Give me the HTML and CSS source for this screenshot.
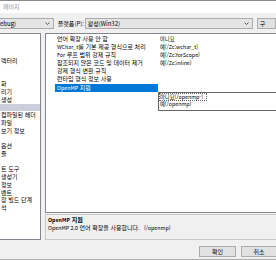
FILE: index.html
```html
<!DOCTYPE html>
<html lang="ko">
<head>
    <meta charset="UTF-8">
    <title>페이지</title>
    <link rel="stylesheet" href="styles.css">
</head>
<body>
    <div class="window">
        <div class="titlebar">페이지</div>

        <div class="toolbar">
            <div class="combo config">
                <span class="combo-text">ebug)</span>
                <svg class="arrow" width="5" height="3" viewBox="0 0 5 3"><path d="M0.5 0.5 L2.5 2.5 L4.5 0.5" fill="none" stroke="#333" stroke-width="0.8"/></svg>
            </div>
            <span class="label">플랫폼(P):</span>
            <div class="combo platform">
                <span class="combo-text">활성(Win32)</span>
                <svg class="arrow" width="5" height="3" viewBox="0 0 5 3"><path d="M0.5 0.5 L2.5 2.5 L4.5 0.5" fill="none" stroke="#333" stroke-width="0.8"/></svg>
            </div>
            <div class="btn manager">구</div>
        </div>

        <div class="main">
            <ul class="tree">
                <li></li>
                <li></li>
                <li></li>
                <li>렉터리</li>
                <li></li>
                <li></li>
                <li>화</li>
                <li>리기</li>
                <li>생성</li>
                <li class="selected"></li>
                <li>컴파일된 헤더</li>
                <li>파일</li>
                <li>보기 정보</li>
                <li></li>
                <li>옵션</li>
                <li>줄</li>
                <li></li>
                <li>트 도구</li>
                <li>생성기</li>
                <li>정보</li>
                <li>벤트</li>
                <li>장 빌드 단계</li>
                <li>석</li>
            </ul>

            <div class="right">
                <div class="grid">
                    <div class="row"><span class="gutter"></span><span class="name">언어 확장 사용 안 함</span><span class="value">아니요</span></div>
                    <div class="row"><span class="gutter"></span><span class="name"><span class="en">WChar_t</span>를 기본 제공 형식으로 처리</span><span class="value">예(/Zc:wchar_t)</span></div>
                    <div class="row"><span class="gutter"></span><span class="name"><span class="en">For</span> 루프 범위 강제 규칙</span><span class="value">예(/Zc:forScope)</span></div>
                    <div class="row"><span class="gutter"></span><span class="name">참조되지 않은 코드 및 데이터 제거</span><span class="value">예(/Zc:inline)</span></div>
                    <div class="row"><span class="gutter"></span><span class="name">강제 형식 변환 규칙</span><span class="value"></span></div>
                    <div class="row"><span class="gutter"></span><span class="name">런타임 형식 정보 사용</span><span class="value"></span></div>
                    <div class="row active"><span class="gutter"></span><span class="name"><span class="en">OpenMP</span> 지원</span><span class="value"></span></div>

                    <ul class="dropdown">
                        <li class="focused">아니요(/openmp-)</li>
                        <li>예(/openmp)</li>
                    </ul>
                </div>

                <div class="desc">
                    <div class="desc-title"><span class="en">OpenMP</span> 지원</div>
                    <div class="desc-text"><span class="desc-main"><span class="en">OpenMP 2.0</span> 언어 확장을 사용합니다.</span><span class="en">(/openmp)</span></div>
                </div>
            </div>
        </div>

        <div class="buttons">
            <div class="btn">확인</div>
            <div class="btn">취소</div>
        </div>
    </div>
</body>
</html>
```

FILE: styles.css
```css
body {
    margin: 0;
    padding: 0;
    width: 276px;
    height: 260px;
    overflow: hidden;
    background-color: #f0f0f0;
    font-family: "Noto Sans CJK KR", "Noto Sans", sans-serif;
    font-size: 6px;
    color: #000;
}

/* latin runs are a little smaller than hangul, as in Malgun Gothic */
.en {
    font-size: 5.3px;
}

.window {
    width: 276px;
    height: 260px;
    overflow: hidden;
}

.titlebar {
    height: 12px;
    line-height: 11px;
    border-top: 1px solid #8a8a8a;
    background-color: #fff;
    color: #9a9a9a;
    padding-left: 3px;
}

.toolbar {
    height: 20px;
    display: flex;
    align-items: flex-start;
    padding-top: 5px;
    box-sizing: border-box;
}

.combo {
    height: 11px;
    box-sizing: border-box;
    border: 1px solid #acacac;
    background-color: #e5e5e5;
    display: flex;
    align-items: center;
    justify-content: space-between;
    padding: 0 3px 0 2px;
}

.combo-text {
    line-height: 9px;
    white-space: nowrap;
}

.config {
    width: 57px;
    margin-left: -1px;
    padding-left: 0;
}

.label {
    margin-left: 4px;
    line-height: 11px;
    width: 28px;
    white-space: nowrap;
}

.platform {
    width: 175px;
}

.btn {
    height: 11px;
    box-sizing: border-box;
    border: 1px solid #adadad;
    background-color: #e1e1e1;
    display: flex;
    align-items: center;
    justify-content: center;
    line-height: 9px;
}

.manager {
    margin-left: 4px;
    width: 20px;
    justify-content: flex-start;
    padding-left: 2px;
}

.main {
    display: flex;
    height: 208px;
}

.tree {
    list-style-type: none;
    margin: 0 0 0 -1px;
    padding: 0;
    width: 42px;
    height: 207px;
    box-sizing: border-box;
    border: 1px solid #828790;
    background-color: #fff;
    overflow: hidden;
    white-space: nowrap;
}

.tree li {
    height: 7.74px;
    line-height: 7.74px;
    padding-left: 1px;
}

.tree .selected {
    background-color: #cccedb;
}

.right {
    margin-left: 4px;
    flex: 1;
    display: flex;
    flex-direction: column;
}

.grid {
    position: relative;
    height: 180px;
    box-sizing: border-box;
    border: 1px solid #828790;
    border-right: none;
    background-color: #fff;
    padding-top: 0.5px;
}

.row {
    display: flex;
    height: 8.2px;
    line-height: 8.2px;
    white-space: nowrap;
}

.gutter {
    width: 9px;
}

.name {
    width: 103px;
    padding-left: 2px;
    box-sizing: border-box;
    overflow: hidden;
}

.value {
    flex: 1;
    padding-left: 2px;
    font-size: 5.3px;
}

.row.active .name {
    background-color: #0078d7;
    color: #fff;
}

.dropdown {
    position: absolute;
    left: 112px;
    top: 58px;
    width: 130px;
    height: 19px;
    margin: 0;
    padding: 0;
    list-style-type: none;
    box-sizing: border-box;
    border: 1px solid #646464;
    background-color: #fff;
    font-size: 5.3px;
}

.dropdown li {
    height: 7.6px;
    line-height: 7.6px;
    padding-left: 1px;
    white-space: nowrap;
}

.dropdown .focused {
    width: 48px;
    height: 8px;
    line-height: 6px;
    box-sizing: border-box;
    padding-left: 0;
    border: 1px dotted #666;
}

.desc {
    margin-top: 1px;
    height: 26px;
    box-sizing: border-box;
    border: 1px solid #c8c8c8;
    border-right: none;
    padding: 1px 0 0 2px;
    line-height: 8px;
}

.desc-title {
    font-weight: bold;
}

.desc-text {
    white-space: nowrap;
}

.desc-main {
    display: inline-block;
    width: 96px;
}

.buttons {
    display: flex;
    justify-content: flex-end;
    gap: 5px;
    margin-top: 5px;
    height: 13px;
    border-bottom: 1px solid #b0b0b0;
}

.buttons .btn {
    width: 37px;
}

.buttons .btn:last-child {
    width: 36px;
    margin-right: -1px;
}
```
